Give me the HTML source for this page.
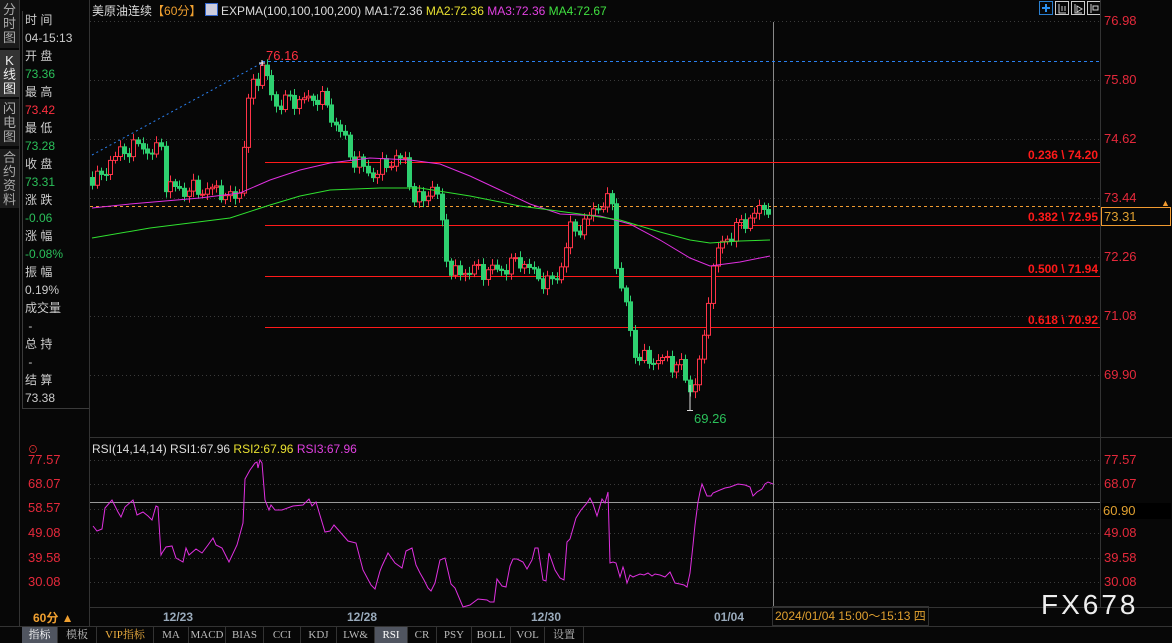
<!DOCTYPE html><html><head><meta charset="utf-8"><style>
body{margin:0;background:#070707;width:1172px;height:643px;overflow:hidden;font-family:"Liberation Sans","Noto Sans CJK SC",sans-serif;position:relative}
.a{position:absolute;white-space:nowrap}
.tab{position:absolute;left:0;width:19px;background:#1c1c1c;color:#aaa;font-size:13px;line-height:14px;text-align:center;box-sizing:border-box}
.info div{height:18px;font-size:12px;line-height:18px;padding-left:2px}
.w{color:#ccc}.g{color:#2bc05a}.r{color:#ff3040}
.tb{position:absolute;top:627px;height:16px;font-size:11px;line-height:16px;color:#bbb;text-align:center;border-right:1px solid #333;font-family:"Liberation Serif","Noto Serif CJK SC",serif}
.ax{position:absolute;left:1104px;color:#e5293b;font-size:13px}
.fib{position:absolute;right:74px;color:#ff1a1a;font-size:12px;font-weight:bold}
</style></head><body>
<div class="tab" style="top:0;height:48px;padding-top:3px">分<br>时<br>图</div>
<div class="tab" style="top:50px;height:47px;padding-top:4px;background:#333;color:#eee">K<br>线<br>图</div>
<div class="tab" style="top:99px;height:47px;padding-top:3px">闪<br>电<br>图</div>
<div class="tab" style="top:149px;height:59px;padding-top:2px">合<br>约<br>资<br>料</div>
<div style="position:absolute;left:19px;top:0;width:1px;height:627px;background:#333"></div>
<div class="info" style="position:absolute;left:22px;top:11px;width:66px;height:397px;border:1px solid #3a3a3a;border-top:none">
<div class="w">时 间</div><div class="w">04-15:13</div><div class="w">开 盘</div><div class="g">73.36</div><div class="w">最 高</div><div class="r">73.42</div><div class="w">最 低</div><div class="g">73.28</div><div class="w">收 盘</div><div class="g">73.31</div><div class="w">涨 跌</div><div class="g">-0.06</div><div class="w">涨 幅</div><div class="g">-0.08%</div><div class="w">振 幅</div><div class="w">0.19%</div><div class="w">成交量</div><div class="w">&nbsp;-</div><div class="w">总 持</div><div class="w">&nbsp;-</div><div class="w">结 算</div><div class="w">73.38</div></div>
<div style="position:absolute;left:89px;top:0;width:1px;height:627px;background:#333"></div>
<div class="a" style="left:92px;top:2px;font-size:12px;color:#ddd">美原油连续<span style="color:#f0a030">【60分】</span> <span style="display:inline-block;width:11px;height:11px;background:#ccd;border:1px solid #36c;vertical-align:-1px"></span> EXPMA(100,100,100,200) MA1:72.36 <span style="color:#e8e030">MA2:72.36</span> <span style="color:#e040e0">MA3:72.36</span> <span style="color:#40e040">MA4:72.67</span></div>
<svg class="a" style="left:1039px;top:1px" width="114" height="15"><g fill="none" stroke="#ccc"><rect x="0.5" y="0.5" width="13" height="13" stroke="#2a7fd0"/><rect x="16.5" y="0.5" width="13" height="13"/><rect x="32.5" y="0.5" width="13" height="13"/><rect x="48.5" y="0.5" width="13" height="13"/></g><path d="M7 3v8M3 7h8" stroke="#2a90f0" stroke-width="2"/><path d="M20 3v9h7M23 5v5M26 5v5M36 3v9h7M38 5l5 3-5 3z M52 3v9M54 5h5v4h-5z" stroke="#ccc" fill="none"/></svg>
<div class="ax" style="top:13px">76.98</div><div class="ax" style="top:72px">75.80</div><div class="ax" style="top:131px">74.62</div><div class="ax" style="top:190px">73.44</div><div class="ax" style="top:249px">72.26</div><div class="ax" style="top:308px">71.08</div><div class="ax" style="top:367px">69.90</div>
<div class="a" style="left:1101px;top:207px;width:66px;height:17px;border:1px solid #f09a30;color:#e0a030;font-size:13px;line-height:17px;padding-left:2px">73.31</div>
<div class="a" style="left:1161px;top:198px;color:#f09a30;font-size:9px">▲</div>
<div class="fib" style="top:148px">0.236 \ 74.20</div><div class="fib" style="top:210px">0.382 \ 72.95</div><div class="fib" style="top:262px">0.500 \ 71.94</div><div class="fib" style="top:313px">0.618 \ 70.92</div>
<div class="a" style="left:266px;top:48px;color:#ff3040;font-size:13px">76.16</div>
<div class="a" style="left:694px;top:411px;color:#2bc05a;font-size:13px">69.26</div>
<div class="a" style="left:28px;top:441px;color:#e33;font-size:10px">⊙</div>
<div class="a" style="left:92px;top:442px;font-size:12px;color:#ddd">RSI(14,14,14) RSI1:67.96 <span style="color:#e8e030">RSI2:67.96</span> <span style="color:#e040e0">RSI3:67.96</span></div>
<div class="ax" style="left:1104px;top:452px">77.57</div><div class="ax" style="left:1104px;top:476px">68.07</div><div class="ax" style="left:1104px;top:525px">49.08</div><div class="ax" style="left:1104px;top:550px">39.58</div><div class="ax" style="left:1104px;top:574px">30.08</div>
<div class="a" style="left:1101px;top:503px;width:68px;height:16px;background:#000;color:#e0a030;font-size:13px;line-height:16px;padding-left:2px">60.90</div>
<div class="ax" style="left:28px;top:452px">77.57</div><div class="ax" style="left:28px;top:476px">68.07</div><div class="ax" style="left:28px;top:500px">58.57</div><div class="ax" style="left:28px;top:525px">49.08</div><div class="ax" style="left:28px;top:550px">39.58</div><div class="ax" style="left:28px;top:574px">30.08</div>
<svg class="a" style="left:0;top:0" width="1172" height="643" id="s"></svg>
<div class="a" style="left:33px;top:609px;color:#f0a030;font-size:12px;font-weight:bold">60分 ▲</div>
<div class="a" style="left:163px;top:610px;color:#9ab;font-size:12px;font-weight:bold">12/23</div>
<div class="a" style="left:347px;top:610px;color:#9ab;font-size:12px;font-weight:bold">12/28</div>
<div class="a" style="left:531px;top:610px;color:#9ab;font-size:12px;font-weight:bold">12/30</div>
<div class="a" style="left:714px;top:610px;color:#9ab;font-size:12px;font-weight:bold">01/04</div>
<div class="a" style="left:772px;top:606px;height:18px;border:1px solid #333;color:#e0a030;font-size:12px;line-height:18px;padding:0 2px">2024/01/04 15:00～15:13 四</div>
<div class="a" style="left:1041px;top:589px;color:#eee;font-size:28px;letter-spacing:3px">FX678</div>
<div class="tb" style="left:22px;width:35px;background:#505560;color:#fff">指标</div>
<div class="tb" style="left:58px;width:38px">模板</div>
<div class="tb" style="left:97px;width:56px;color:#f0b040">VIP指标</div>
<div class="tb" style="left:154px;width:34px">MA</div><div class="tb" style="left:189px;width:36px">MACD</div><div class="tb" style="left:226px;width:37px">BIAS</div><div class="tb" style="left:264px;width:36px">CCI</div><div class="tb" style="left:301px;width:35px">KDJ</div><div class="tb" style="left:337px;width:37px">LW&amp;</div><div class="tb" style="left:375px;width:32px;background:#505560;color:#fff">RSI</div><div class="tb" style="left:408px;width:28px">CR</div><div class="tb" style="left:437px;width:34px">PSY</div><div class="tb" style="left:472px;width:38px">BOLL</div><div class="tb" style="left:511px;width:33px">VOL</div><div class="tb" style="left:545px;width:38px">设置</div>
<script>
var s=document.getElementById('s'),h='';
function P(p){return 21+(76.98-p)*50}
function L(x1,y1,x2,y2,c,d){h+='<line x1="'+x1+'" y1="'+y1+'" x2="'+x2+'" y2="'+y2+'" stroke="'+c+'"'+(d?' stroke-dasharray="'+d+'"':'')+'/>'}
[21,80,139,198,257,316,375].forEach(function(y){L(90,y+.5,1100,y+.5,'#3a3a3a','1 3')});
[460,484,509,533,558,582].forEach(function(y){L(90,y+.5,1100,y+.5,'#3a3a3a','1 3')});
L(90,437.5,1172,437.5,'#333');L(0,626.5,1172,626.5,'#333');L(90,607.5,1172,607.5,'#333');L(1100.5,0,1100.5,607,'#333');
L(773.5,22,773.5,607,'#888');
L(90,502.5,1100,502.5,'#999');
h+='<polyline fill="none" stroke="#2a80f0" stroke-dasharray="2 3" points="92,155 262,63"/>';L(262,61.5,1100,61.5,'#2a80f0','3 3');
L(90,206.5,1100,206.5,'#f09a30','3 3');
[162,225,276,327].forEach(function(y){L(265,y+.5,1100,y+.5,'#ff1a1a')});
var k=[[92,73.85],[100,73.8],[110,74.2],[125,74.4],[140,74.5],[155,74.3],[162,74.6],[165,73.7],[180,73.6],[200,73.6],[220,73.6],[230,73.4],[240,73.6],[245,74.8],[250,75.6],[258,75.9],[262,76.1],[268,75.7],[275,75.3],[290,75.4],[310,75.4],[320,75.5],[330,75.1],[340,74.8],[350,74.3],[365,74.0],[375,73.9],[390,74.2],[405,74.2],[415,73.3],[425,73.5],[435,73.7],[445,72.5],[450,71.9],[470,72.0],[500,72.0],[520,72.2],[535,71.9],[550,71.7],[560,72.0],[570,72.8],[585,72.9],[595,73.3],[605,73.3],[612,73.4],[618,71.7],[625,71.4],[632,70.5],[640,70.2],[660,70.2],[680,70.1],[690,69.6],[697,69.9],[705,70.7],[710,71.9],[720,72.5],[740,72.9],[760,73.2],[770,73.31]];
function I(x){for(var i=1;i<k.length;i++)if(x<=k[i][0]){var a=k[i-1],b=k[i];return a[1]+(b[1]-a[1])*(x-a[0])/(b[0]-a[0])}return 73.31}
var prev=73.85;
for(var x=92;x<=770;x+=4.6){var c=I(x)+0.12*Math.sin(x*1.7)+0.08*Math.sin(x*0.53),o=prev;var hi=Math.max(o,c)+0.05+0.08*Math.abs(Math.sin(x*2.3)),lo=Math.min(o,c)-0.05-0.08*Math.abs(Math.cos(x*1.9));var up=c>=o,col=up?'#ff3448':'#2ed070';var X=Math.round(x);
L(X+.5,P(hi),X+.5,P(lo),col);var y1=P(Math.max(o,c)),y2=P(Math.min(o,c));if(y2-y1<1)y2=y1+1;
h+='<rect x="'+(X-1.5)+'" y="'+y1+'" width="4" height="'+(y2-y1)+'" fill="'+(up?'#070707':col)+'" stroke="'+col+'"/>';prev=c}
L(262,60,262,66,'#fff');L(259,63,265,63,'#fff');L(690,385,690,411,'#ddd');L(687,410.5,693,410.5,'#ddd');
h+='<polyline fill="none" stroke="#e030e0" points="92,208 130,204 200,198 240,193 270,180 300,170 330,163 370,158 410,160 440,164 470,176 500,190 530,204 560,214 600,216 630,224 660,240 690,258 710,266 740,262 770,256"/>';
h+='<polyline fill="none" stroke="#30e030" points="92,238 150,228 230,218 270,205 300,196 330,190 380,188 420,188 470,196 520,206 580,214 620,220 660,232 690,240 710,243 740,241 770,240"/>';
h+='<polyline fill="none" stroke="#e030e0" points="93,526 97,531 102,529 105,508 112,500 118,512 121,517 125,507 133,500 137,515 143,512 148,516 152,520 156,506 158,507 161,555 162,553 166,547 172,546 176,558 183,562 186,548 189,555 196,549 202,553 208,545 213,538 216,545 222,548 229,562 237,545 243,523 245,479 250,470 255,463 257,462 258,468 260,460 262,463 265,500 269,510 271,505 275,510 282,510 293,506 303,505 309,499 312,506 316,502 325,532 330,531 334,525 348,541 356,543 363,570 371,585 375,589 380,571 382,566 388,553 395,563 402,568 406,551 412,548 416,565 420,573 424,580 428,588 431,591 435,583 440,560 445,558 451,584 455,588 463,607 470,605 478,599 487,600 490,602 494,602 497,579 502,586 506,587 510,566 513,559 517,559 523,562 527,569 532,560 535,548 538,548 543,580 546,581 549,553 555,570 560,578 564,580 567,542 570,539 576,518 581,510 587,503 590,498 593,504 597,516 602,499 605,503 608,492 610,563 613,562 616,563 620,577 623,567 624,570 627,583 630,575 633,577 640,574 644,575 648,573 652,576 655,574 660,575 665,577 670,572 675,583 680,584 684,585 687,587 690,573 693,545 695,525 698,502 700,492 702,484 707,496 711,496 713,493 720,490 725,488 730,487 738,484 745,485 750,487 753,496 757,492 762,489 765,484 768,482 773,484"/>';
s.innerHTML=h;
</script>
</body></html>
